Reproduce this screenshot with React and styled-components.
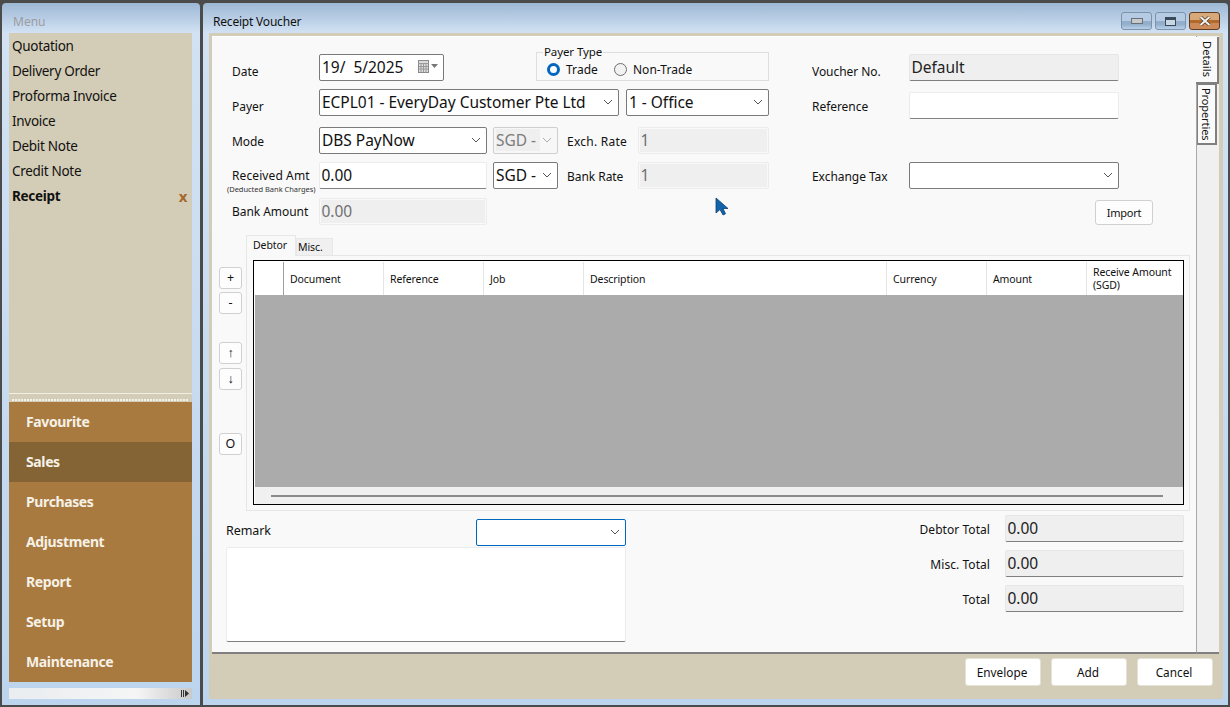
import React from 'react';
import styled, { createGlobalStyle } from 'styled-components';

const GlobalStyle = createGlobalStyle`
  html, body {
    margin: 0;
    padding: 0;
    overflow: hidden;
    background: #4b4b4b;
  }
  * {
    box-sizing: border-box;
  }
`;

const uiFont = `"Noto Sans", "Open Sans", sans-serif`;
const tan = '#d3ccb6';
const frame = 'linear-gradient(to bottom, #9db8d4 0, #d2e2f4 30px, #bcd4ed 100%)';

const Shell = styled.div`
  position: relative;
  display: flex;
  gap: 3px;
  width: 1230px;
  height: 707px;
  padding: 3px 2px 2px;
  background: #4b4b4b;
  font-family: ${uiFont};
  color: #111;
`;

/* left menu window */
const MenuWindow = styled.aside`
  display: flex;
  flex-direction: column;
  width: 198px;
  padding: 0 8px 6px 7px;
  border-radius: 4px 4px 0 0;
  background: ${frame};
`;

const MenuTitle = styled.div`
  height: 30px;
  padding: 11px 0 0 4px;
  font-size: 12px;
  line-height: 16px;
  color: #9c9ca2;
`;

const MenuList = styled.ul`
  flex: 1;
  margin: 0;
  padding: 0;
  list-style: none;
  background: ${tan};
`;

const MenuItem = styled.li`
  display: flex;
  align-items: center;
  justify-content: space-between;
  height: 25px;
  padding: 0 5px 0 3px;
  font-size: 13.5px;
  font-weight: ${p => (p.$active ? 700 : 400)};
  letter-spacing: -0.3px;
`;

const CloseMark = styled.span`
  font-size: 15px;
  font-weight: 700;
  color: #a5692c;
`;

const Splitter = styled.div`
  height: 9px;
  background: ${tan};
  border-top: 1px solid #f1eee3;
  padding-top: 5px;
  &::after {
    content: '';
    display: block;
    height: 2px;
    margin: 0 3px;
    background: repeating-linear-gradient(to right, #f5f2e8 0 2px, transparent 2px 3px);
  }
`;

const SectionBar = styled.div`
  display: flex;
  align-items: center;
  height: 40px;
  padding: 0 0 2px 17px;
  background: ${p => (p.$active ? '#846434' : '#a87a40')};
  color: #f6f1e6;
  font-size: 14px;
  font-weight: 700;
  letter-spacing: -0.38px;
`;

const MenuFoot = styled.div`
  display: flex;
  align-items: center;
  justify-content: flex-end;
  height: 11px;
  margin-top: 6px;
  padding-right: 3px;
  background: linear-gradient(to right, #e9edf0, #f5f5f5 70%, #c9c9c9);
`;

/* right voucher window */
const VoucherWindow = styled.main`
  flex: 1;
  display: flex;
  flex-direction: column;
  min-width: 0;
  padding: 0 5px 6px 6px;
  border-radius: 4px 4px 0 0;
  background: ${frame};
`;

const TitleBar = styled.header`
  display: flex;
  justify-content: space-between;
  height: 30px;
  padding: 9px 3px 0 4px;
  font-size: 12px;
  line-height: 19px;
  letter-spacing: -0.2px;
`;

const WindowButtons = styled.div`
  display: flex;
  gap: 3px;
`;

const WindowButton = styled.div`
  display: flex;
  align-items: center;
  justify-content: center;
  width: 31px;
  height: 18px;
  border: 1px solid ${p => (p.$close ? '#5f3c22' : '#7d93ab')};
  border-radius: 3px;
  background: ${p =>
    p.$close
      ? 'linear-gradient(to bottom, #d9a878 0 42%, #b26a2c 42% 65%, #cc8a58 65% 100%)'
      : 'linear-gradient(to bottom, #b4cbe3 0 50%, #93aecb 50% 70%, #b9d0e8 100%)'};
`;

const VoucherBody = styled.div`
  flex: 1;
  display: flex;
  flex-direction: column;
  min-height: 0;
  padding: 3px 4px 0 3px;
  background: ${tan};
`;

const BodyTop = styled.div`
  display: flex;
  height: 618px;
`;

const Panel = styled.section`
  flex: 1;
  display: flex;
  flex-direction: column;
  min-width: 0;
  background: #f9f9f9;
  border-top: 1px solid #fff;
  border-bottom: 2px solid #808080;
`;

const SideTabs = styled.nav`
  display: flex;
  flex-direction: column;
  width: 23px;
  padding-top: 1px;
  background: #f0f0f0;
  border-left: 1px solid #a8a8a8;
  border-bottom: 2px solid #808080;
`;

const SideTab = styled.div`
  writing-mode: vertical-rl;
  display: flex;
  align-items: center;
  justify-content: center;
  width: ${p => (p.$active ? '23px' : '20px')};
  height: ${p => (p.$active ? '47px' : '61px')};
  margin-left: ${p => (p.$active ? '-1px' : '0')};
  padding-left: ${p => (p.$active ? '2px' : '0')};
  background: ${p => (p.$active ? '#f9f9f9' : '#fafafa')};
  border-right: 2px solid #808080;
  border-bottom: 2px solid #808080;
  border-left: ${p => (p.$active ? 'none' : '1px solid #808080')};
  border-top: ${p => (p.$active ? 'none' : '1px solid #808080')};
  font-size: 11px;
  letter-spacing: ${p => (p.$active ? '0.1px' : '-0.1px')};
`;

const Form = styled.div`
  display: flex;
  flex-direction: column;
  padding: 8px 0 0 20px;
`;

const Row = styled.div`
  display: flex;
  align-items: flex-end;
  gap: 43px;
  margin-top: ${p => p.$mt || 0}px;
`;

const LeftCell = styled.div`
  display: flex;
  align-items: flex-end;
  width: 537px;
`;

const RightCell = styled.div`
  display: flex;
  align-items: flex-end;
`;

const Label = styled.div`
  display: flex;
  align-items: center;
  flex: none;
  width: ${p => p.$w}px;
  height: 27px;
  padding-top: ${p => p.$dy || 0}px;
  margin-left: ${p => p.$ml || 0}px;
  font-size: 12px;
  letter-spacing: ${p => p.$ls || -0.05}px;
`;

const StackLabel = styled.div`
  flex: none;
  width: 87px;
  height: 27px;
  padding-top: 6px;
  font-size: 12px;
  line-height: 16px;
  letter-spacing: 0.1px;
`;

const SubLabel = styled.div`
  margin-left: -5px;
  font-size: 7.5px;
  line-height: 10px;
  white-space: nowrap;
  letter-spacing: -0.03px;
  color: #333;
`;

const Field = styled.div`
  display: flex;
  align-items: center;
  flex: none;
  width: ${p => p.$w}px;
  height: ${p => p.$h || 27}px;
  margin-left: ${p => p.$ml || 0}px;
  margin-bottom: ${p => p.$mb || 0}px;
  padding: 0 2px 2px 1.5px;
  font-size: 15.5px;
  letter-spacing: -0.03px;
  white-space: pre;
  background: #fff;
  border: 1px solid #ececec;
  border-bottom: 1px solid #808080;
  border-radius: 2px;
`;

const ReadField = styled(Field)`
  background: #efefef;
  color: ${p => (p.$muted ? '#6f6f6f' : '#222')};
  border-color: ${p => (p.$muted ? '#ececec' : '#e6e6e6')};
  border-bottom-color: ${p => (p.$muted ? '#ececec' : '#808080')};
  box-shadow: ${p => (p.$muted ? 'inset 0 0 0 1px #f9f9f9' : 'none')};
`;

const Combo = styled.div`
  display: flex;
  align-items: center;
  justify-content: space-between;
  flex: none;
  width: ${p => p.$w}px;
  height: 27px;
  margin-left: ${p => p.$ml || 0}px;
  padding: 0 5px 2px 2px;
  font-size: 15.5px;
  letter-spacing: -0.03px;
  white-space: pre;
  overflow: hidden;
  background: ${p => (p.$disabled ? '#f7f7f7' : '#fff')};
  color: ${p => (p.$disabled ? '#7c7c7c' : '#111')};
  border: ${p => (p.$focus ? '1px solid #0067c0' : `1px solid ${p.$disabled ? '#cfcfcf' : '#7a7a7a'}`)};
  border-radius: 2px;
`;

const ComboValue = styled.span`
  background: #efefef;
`;

const Fieldset = styled.fieldset`
  display: flex;
  align-items: center;
  gap: 16px;
  width: 233px;
  height: 36px;
  margin: 0 0 0 auto;
  padding: 0 0 1px 10px;
  border: 1px solid #dedede;
`;

const Legend = styled.legend`
  margin-left: -4px;
  padding: 0 1px;
  font-size: 11.5px;
  line-height: 14px;
  letter-spacing: -0.1px;
`;

const RadioOption = styled.label`
  display: flex;
  align-items: center;
  gap: 6px;
  font-size: 12px;
  letter-spacing: 0.05px;
`;

const RadioDot = styled.span`
  width: 13px;
  height: 13px;
  border-radius: 50%;
  background: ${p => (p.$on ? '#fff' : '#f2f2f2')};
  border: ${p => (p.$on ? '3.5px solid #0067c0' : '1px solid #6e6e6e')};
`;

const SmallButton = styled.button`
  display: flex;
  align-items: center;
  justify-content: center;
  padding: 0 0 1px;
  font-family: inherit;
  color: #111;
  background: #fdfdfd;
  border: 1px solid #d0d0d0;
  border-radius: 3px;
`;

const ImportButton = styled(SmallButton)`
  width: 58px;
  height: 25px;
  margin-left: 283px;
  font-size: 11px;
  letter-spacing: -0.2px;
`;

const Detail = styled.div`
  display: flex;
  gap: 4px;
  margin: 10px 0 0 7px;
`;

const SideButtons = styled.div`
  display: flex;
  flex-direction: column;
  width: 23px;
  padding-top: 32px;
`;

const SideButton = styled(SmallButton)`
  width: 23px;
  height: 22px;
  margin-top: ${p => p.$mt || 0}px;
  font-size: 12.5px;
`;

const TabArea = styled.div`
  width: 944px;
`;

const TabRow = styled.div`
  display: flex;
  align-items: flex-end;
  height: 20px;
`;

const Tab = styled.div`
  display: flex;
  align-items: center;
  position: relative;
  z-index: ${p => (p.$active ? 1 : 0)};
  width: ${p => (p.$active ? 50 : 37)}px;
  height: ${p => (p.$active ? 21 : 17)}px;
  margin-bottom: ${p => (p.$active ? -1 : 0)}px;
  padding: 0 0 ${p => (p.$active ? 3 : 1)}px ${p => (p.$active ? 6 : 1)}px;
  background: ${p => (p.$active ? '#f9f9f9' : '#f0f0f0')};
  border: 1px solid #e8e8e8;
  border-bottom: none;
  font-size: 10.5px;
  letter-spacing: -0.1px;
`;

const TabPanel = styled.div`
  height: 256px;
  padding: 4px 5px 5px 6px;
  border: 1px solid #e6e6e6;
`;

const Grid = styled.div`
  display: flex;
  flex-direction: column;
  height: 100%;
  padding: 1px 0 0 1px;
  background: #fff;
  border: 1px solid #000;
`;

const GridHead = styled.div`
  display: grid;
  grid-template-columns: 29px 100px 100px 100px 303px 100px 100px 1fr;
  height: 33px;
  flex: none;
`;

const HeadCell = styled.div`
  display: flex;
  align-items: center;
  padding: 1px 0 0 6px;
  font-size: 10.5px;
  line-height: 13px;
  letter-spacing: -0.1px;
  border-right: 1px solid ${p => (p.$first ? '#a0a0a0' : '#e4e4e4')};
  &:last-child {
    border-right: none;
  }
`;

const GridBody = styled.div`
  flex: 1;
  background: #ababab;
`;

const GridScroll = styled.div`
  display: flex;
  align-items: center;
  height: 17px;
  flex: none;
  padding: 0 20px 0 16px;
  background: #f0f0f0;
  &::after {
    content: '';
    flex: 1;
    height: 2px;
    background: #8a8a8a;
  }
`;

const Bottom = styled.div`
  display: flex;
  justify-content: space-between;
  padding: 0 12px 0 14px;
`;

const RemarkColumn = styled.div`
  width: 400px;
  padding-top: 8px;
`;

const RemarkHead = styled.div`
  display: flex;
  justify-content: space-between;
`;

const RemarkLabel = styled.div`
  font-size: 12.5px;
  line-height: 24px;
  letter-spacing: -0.1px;
`;

const Memo = styled.div`
  height: 95px;
  margin-top: 1px;
  background: #fff;
  border: 1px solid #ececec;
  border-bottom: 1px solid #808080;
  border-radius: 2px;
`;

const TotalsColumn = styled.div`
  display: flex;
  flex-direction: column;
  gap: 8px;
  padding-top: 4px;
`;

const TotalRow = styled.div`
  display: flex;
  align-items: center;
  justify-content: flex-end;
  gap: 15px;
`;

const TotalLabel = styled.div`
  padding-top: 2px;
  font-size: 12px;
  letter-spacing: 0.05px;
`;

const ActionBar = styled.footer`
  flex: 1;
  display: flex;
  justify-content: flex-end;
  gap: 10px;
  padding: 4px 6px 0 0;
`;

const ActionButton = styled.button`
  width: 76px;
  height: 28px;
  padding: 0 2px 1px 0;
  font-family: inherit;
  font-size: 11.8px;
  color: #111;
  background: #fff;
  border: 1px solid #e4e1d6;
  border-radius: 3px;
`;

const Cursor = styled.svg`
  position: absolute;
  left: 715px;
  top: 197px;
`;

const IconSlot = styled.svg`
  flex: none;
`;

const Chevron = ({ color = '#555' }) => (
  <IconSlot width="10" height="6" viewBox="0 0 10 6">
    <path d="M1 1l4 4 4-4" fill="none" stroke={color} strokeWidth="1" />
  </IconSlot>
);

const CalendarIcon = () => (
  <IconSlot width="20" height="13" viewBox="0 0 20 13">
    <rect x="0.5" y="0.5" width="10" height="12" fill="#dcdcdc" stroke="#8a8a8a" />
    <path d="M0 3.5h11M3 4v8M5.5 4v8M8 4v8M1 6.5h9M1 9h9" stroke="#9a9a9a" strokeWidth="1" />
    <path d="M13 4h7l-3.5 4z" fill="#777" />
  </IconSlot>
);

const menuItems = ['Quotation', 'Delivery Order', 'Proforma Invoice', 'Invoice', 'Debit Note', 'Credit Note'];
const sections = ['Favourite', 'Sales', 'Purchases', 'Adjustment', 'Report', 'Setup', 'Maintenance'];
const columns = ['Document', 'Reference', 'Job', 'Description', 'Currency', 'Amount'];
const totals = ['Debtor Total', 'Misc. Total', 'Total'];

export default function App() {
  return (
    <Shell>
      <GlobalStyle />
      <MenuWindow>
        <MenuTitle>Menu</MenuTitle>
        <MenuList>
          {menuItems.map(item => (
            <MenuItem key={item}>{item}</MenuItem>
          ))}
          <MenuItem $active>
            Receipt
            <CloseMark>x</CloseMark>
          </MenuItem>
        </MenuList>
        <Splitter />
        {sections.map(s => (
          <SectionBar key={s} $active={s === 'Sales'}>{s}</SectionBar>
        ))}
        <MenuFoot>
          <svg width="8" height="7" viewBox="0 0 8 7">
            <path d="M0 0h1v7H0zM2 0h1v7H2zM4 0l4 3.5L4 7z" fill="#333" />
          </svg>
        </MenuFoot>
      </MenuWindow>

      <VoucherWindow>
        <TitleBar>
          Receipt Voucher
          <WindowButtons>
            <WindowButton>
              <svg width="12" height="6" viewBox="0 0 12 6">
                <rect x="0.5" y="0.5" width="11" height="5" fill="#c9c9c9" stroke="#66707c" />
              </svg>
            </WindowButton>
            <WindowButton>
              <svg width="11" height="9" viewBox="0 0 11 9">
                <rect x="0.5" y="0.5" width="10" height="8" fill="#c9d6e4" stroke="#3a4a5a" />
                <rect x="1" y="1" width="9" height="2" fill="#3a4a5a" />
              </svg>
            </WindowButton>
            <WindowButton $close>
              <svg width="12" height="10" viewBox="0 0 12 10">
                <path d="M1.5 1l9 8M10.5 1l-9 8" stroke="#4a3a2a" strokeWidth="3.4" />
                <path d="M1.5 1l9 8M10.5 1l-9 8" stroke="#f4f1ea" strokeWidth="2" />
              </svg>
            </WindowButton>
          </WindowButtons>
        </TitleBar>

        <VoucherBody>
          <BodyTop>
            <Panel>
              <Form>
                <Row>
                  <LeftCell>
                    <Label $w={87} $dy={7}>Date</Label>
                    <Combo $w={125}>
                      19/  5/2025
                      <CalendarIcon />
                    </Combo>
                    <Fieldset>
                      <Legend>Payer Type</Legend>
                      <RadioOption><RadioDot $on />Trade</RadioOption>
                      <RadioOption><RadioDot />Non-Trade</RadioOption>
                    </Fieldset>
                  </LeftCell>
                  <RightCell>
                    <Label $w={97} $dy={7}>Voucher No.</Label>
                    <ReadField $w={210}>Default</ReadField>
                  </RightCell>
                </Row>

                <Row $mt={8}>
                  <LeftCell>
                    <Label $w={87} $dy={7}>Payer</Label>
                    <Combo $w={300}>
                      ECPL01 - EveryDay Customer Pte Ltd
                      <Chevron />
                    </Combo>
                    <Combo $w={143} $ml={7}>
                      1 - Office
                      <Chevron />
                    </Combo>
                  </LeftCell>
                  <RightCell>
                    <Label $w={97} $dy={7}>Reference</Label>
                    <Field $w={210} $mb={-3} />
                  </RightCell>
                </Row>

                <Row $mt={11}>
                  <LeftCell>
                    <Label $w={87} $dy={2}>Mode</Label>
                    <Combo $w={168}>
                      DBS PayNow
                      <Chevron />
                    </Combo>
                    <Combo $w={65} $ml={6} $disabled>
                      <ComboValue>SGD - </ComboValue>
                      <Chevron color="#aaa" />
                    </Combo>
                    <Label $w={71} $ml={9} $dy={2} $ls={0.25}>Exch. Rate</Label>
                    <ReadField $w={131} $muted>1</ReadField>
                  </LeftCell>
                </Row>

                <Row $mt={8}>
                  <LeftCell>
                    <StackLabel>
                      Received Amt
                      <SubLabel>(Deducted Bank Charges)</SubLabel>
                    </StackLabel>
                    <Field $w={168}>0.00</Field>
                    <Combo $w={65} $ml={6}>
                      SGD -
                      <Chevron />
                    </Combo>
                    <Label $w={71} $ml={9} $dy={2}>Bank Rate</Label>
                    <ReadField $w={131} $muted>1</ReadField>
                  </LeftCell>
                  <RightCell>
                    <Label $w={97} $dy={2}>Exchange Tax</Label>
                    <Combo $w={210}>
                      <span />
                      <Chevron />
                    </Combo>
                  </RightCell>
                </Row>

                <Row $mt={9}>
                  <LeftCell>
                    <Label $w={87}>Bank Amount</Label>
                    <ReadField $w={168} $muted>0.00</ReadField>
                  </LeftCell>
                  <RightCell>
                    <ImportButton>Import</ImportButton>
                  </RightCell>
                </Row>
              </Form>

              <Detail>
                <SideButtons>
                  <SideButton>+</SideButton>
                  <SideButton $mt={3}>-</SideButton>
                  <SideButton $mt={28}>↑</SideButton>
                  <SideButton $mt={4}>↓</SideButton>
                  <SideButton $mt={43}>O</SideButton>
                </SideButtons>
                <TabArea>
                  <TabRow>
                    <Tab $active>Debtor</Tab>
                    <Tab>Misc.</Tab>
                  </TabRow>
                  <TabPanel>
                    <Grid>
                      <GridHead>
                        <HeadCell $first />
                        {columns.map(c => (
                          <HeadCell key={c}>{c}</HeadCell>
                        ))}
                        <HeadCell>Receive Amount (SGD)</HeadCell>
                      </GridHead>
                      <GridBody />
                      <GridScroll />
                    </Grid>
                  </TabPanel>
                </TabArea>
              </Detail>

              <Bottom>
                <RemarkColumn>
                  <RemarkHead>
                    <RemarkLabel>Remark</RemarkLabel>
                    <Combo $w={150} $focus>
                      <span />
                      <Chevron />
                    </Combo>
                  </RemarkHead>
                  <Memo />
                </RemarkColumn>
                <TotalsColumn>
                  {totals.map(t => (
                    <TotalRow key={t}>
                      <TotalLabel>{t}</TotalLabel>
                      <ReadField $w={179}>0.00</ReadField>
                    </TotalRow>
                  ))}
                </TotalsColumn>
              </Bottom>
            </Panel>

            <SideTabs>
              <SideTab $active>Details</SideTab>
              <SideTab>Properties</SideTab>
            </SideTabs>
          </BodyTop>

          <ActionBar>
            <ActionButton>Envelope</ActionButton>
            <ActionButton>Add</ActionButton>
            <ActionButton>Cancel</ActionButton>
          </ActionBar>
        </VoucherBody>
      </VoucherWindow>

      <Cursor width="14" height="19" viewBox="0 0 14 19">
        <path d="M1 1v15l4-3.5L8 18l2.5-1.2L8 11.5h5z" fill="#1163ab" stroke="#0c3f70" strokeWidth="0.8" />
      </Cursor>
    </Shell>
  );
}
